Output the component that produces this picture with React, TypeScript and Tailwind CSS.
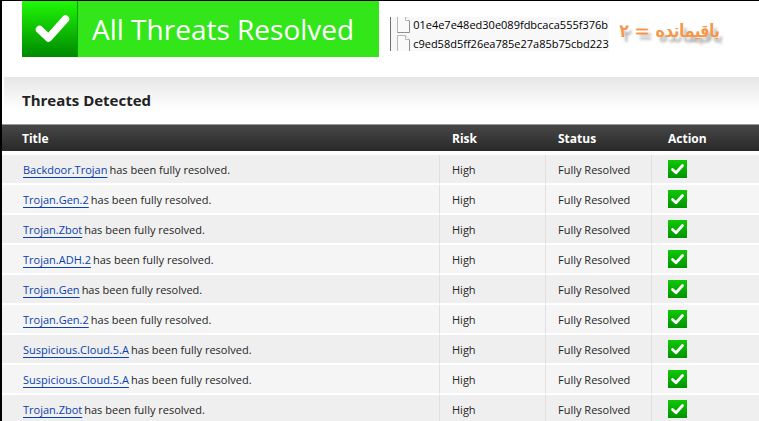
const threats = [
  "Backdoor.Trojan",
  "Trojan.Gen.2",
  "Trojan.Zbot",
  "Trojan.ADH.2",
  "Trojan.Gen",
  "Trojan.Gen.2",
  "Suspicious.Cloud.5.A",
  "Suspicious.Cloud.5.A",
  "Trojan.Zbot",
];

const files = ["01e4e7e48ed30e089fdbcaca555f376b", "c9ed58d5ff26ea785e27a85b75cbd223"];

function Check({ className }: { className: string }) {
  return (
    <svg className={className} viewBox="0 0 56 56" fill="none" stroke="white" aria-hidden="true">
      <path strokeWidth={7.5} strokeLinecap="round" strokeLinejoin="round" d="M17.5 28.5 26.5 37 43.5 18" />
    </svg>
  );
}

function SmallCheck() {
  return (
    <svg className="w-[19px] h-[18px]" viewBox="0 0 19 18" fill="none" stroke="white" role="img" aria-label="Resolved">
      <path strokeWidth={2.8} strokeLinecap="round" strokeLinejoin="round" d="M4.5 9.5 8 12.8 14.5 5.5" />
    </svg>
  );
}

function FileIcon() {
  return (
    <svg className="w-[14px] h-[17px] shrink-0" viewBox="0 0 14 17" aria-hidden="true">
      <path fill="#fafafa" stroke="#b8b8b8" d="M.5 .5h8l4 4v12H.5z" />
      <path fill="#fff" stroke="#b8b8b8" d="M8.5 .5v4h4" />
      <path stroke="#909090" d="M.5 16.5h12V5" fill="none" />
    </svg>
  );
}

function Banner() {
  return (
    <div className="flex h-14 bg-[#33e619]">
      <div className="w-14 border-r border-[#0a9c05] bg-linear-to-b from-[#20f808] to-[#008a00]">
        <Check className="w-14 h-14" />
      </div>
      <h1 className="pl-[14px] pr-[25px] text-[28px] leading-[56px] text-white whitespace-nowrap">All Threats Resolved</h1>
    </div>
  );
}

export default function App() {
  return (
    <main className="h-screen overflow-hidden border-l-2 border-t border-black bg-white font-['Open_Sans','Noto_Sans',sans-serif] text-xs text-[#262626]">
      <header className="flex items-start pl-5 pb-5">
        <Banner />
        <ul className="ml-[11px] mt-4 flex h-[34px] flex-col justify-center overflow-hidden border-l border-[#707070] bg-[#f8f8f8] pl-[6px] text-[11px] text-black">
          {files.map((file) => (
            <li key={file} className="flex h-[19px] shrink-0 items-center gap-[2px] leading-[19px]">
              <FileIcon />
              {file}
            </li>
          ))}
        </ul>
        <p
          dir="rtl"
          className="ml-[10px] mt-4 font-['DejaVu_Sans',sans-serif] text-lg whitespace-nowrap text-[#f79646] [text-shadow:1px_0_0_#f79646,4px_5px_3px_#999999]"
        >
          باقیمانده = ۲
        </p>
      </header>

      <section>
        <div className="ml-[2px] h-[47px] bg-linear-to-b from-[#e6e6e6] to-white to-70% pl-[18px]">
          <h2 className="text-[15px] leading-[47px] font-bold text-[#222222]">Threats Detected</h2>
        </div>
        <table className="w-full table-fixed border-separate border-spacing-0 text-left whitespace-nowrap">
          <colgroup>
            <col />
            <col className="w-[106px]" />
            <col className="w-[106px]" />
            <col className="w-[108px]" />
          </colgroup>
          <thead>
            <tr className="h-[27px] bg-linear-to-b from-[#484848] to-[#292929] text-white">
              <th className="border-t border-[#999999] p-0 pt-[2px] pl-5">Title</th>
              <th className="border-t border-[#999999] p-0 pt-[2px] pl-[13px]">Risk</th>
              <th className="border-t border-[#999999] p-0 pt-[2px] pl-[13px]">Status</th>
              <th className="border-t border-[#999999] p-0 pt-[2px] pl-[17px]">Action</th>
            </tr>
          </thead>
          <tbody className="text-[11px] before:block before:h-1 [&_td]:border-b-2 [&_td]:border-b-white">
            {threats.map((name, i) => (
              <tr key={i} className="h-[30px] odd:bg-[#efefef] even:bg-[#f5f5f5]">
                <td className="p-0 pt-[2px] pl-[21px]">
                  <a href="#" className="text-[#0a3fae] underline underline-offset-[3px]">
                    {name}
                  </a>
                  <span className="ml-[2px]">has been fully resolved.</span>
                </td>
                <td className="border-l border-l-[#e0e0e0] p-0 pt-[2px] pl-3">High</td>
                <td className="border-l border-l-[#e0e0e0] p-0 pt-[2px] pl-3">Fully Resolved</td>
                <td className="border-l border-l-[#e0e0e0] p-0 pl-4">
                  <div className="w-[19px] bg-linear-to-b from-[#10c805] to-[#009400]">
                    <SmallCheck />
                  </div>
                </td>
              </tr>
            ))}
          </tbody>
        </table>
      </section>
    </main>
  );
}
